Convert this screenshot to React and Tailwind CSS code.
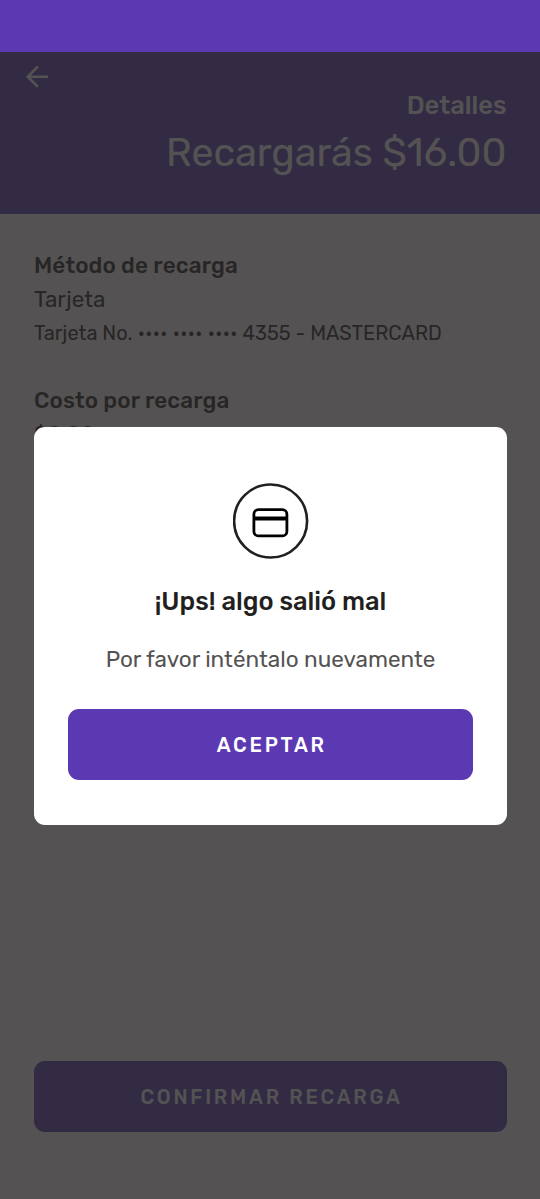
import clsx from 'clsx';

const Button = ({ children, className }) => (
  <button
    className={clsx(
      'flex h-[70.5px] w-full items-center justify-center rounded-[11px] bg-[#5b39b3] pl-[2.5px] text-[20px] font-medium tracking-[2.75px] text-white',
      className
    )}
  >
    {children}
  </button>
);

const BackIcon = () => (
  <svg className="h-[24px] w-[24px]" viewBox="0 0 24 24" fill="none" stroke="white" strokeWidth="2.6">
    <path d="M23 11.7H3M12.9 1.5L2.8 11.7l10.1 10.2" />
  </svg>
);

const CardIcon = () => (
  <svg className="h-[76px] w-[76px]" viewBox="0 0 76 76" fill="none">
    <circle cx="37.6" cy="38" r="36.5" stroke="#231f20" strokeWidth="2.6" />
    <rect x="20.9" y="26.7" width="33" height="26.2" rx="4.5" stroke="black" strokeWidth="2.8" />
    <path d="M20.5 35.4h33.5" stroke="black" strokeWidth="4" />
  </svg>
);

const App = () => {
  return (
    <div className="relative flex h-[1199px] w-[540px] flex-col overflow-hidden bg-white font-['Rubik','Roboto',sans-serif] text-[#231f20]">
      {/* Status bar */}
      <div className="h-[52px] shrink-0 bg-[#5b39b3]" />

      {/* Header */}
      <header className="h-[162px] shrink-0 bg-[#5b39b3] pt-[13px] pr-[33.5px] pl-[25px] text-white">
        <BackIcon />
        <div className="flex flex-col items-end whitespace-nowrap">
          <p className="text-[25.5px] leading-[32px] font-medium">Detalles</p>
          <h1 className="mt-[7px] text-[39.3px] leading-[50px]">Recargarás $16.00</h1>
        </div>
      </header>

      {/* Recharge details */}
      <main className="flex flex-1 flex-col pt-[35px] pr-[33.5px] pb-[67.5px] pl-[34px] whitespace-nowrap">
        <section>
          <h2 className="text-[22.5px] leading-[34px] font-medium tracking-[0.1px]">Método de recarga</h2>
          <p className="text-[22.5px] leading-[34px]">Tarjeta</p>
          <p className="-mt-[1px] text-[20px] leading-[34px]">
            <span>Tarjeta No. </span>
            <span className="tracking-[-0.1px]">•••• •••• ••••</span>
            <span> 4355 - MASTERCARD</span>
          </p>
        </section>
        <section className="mt-[34px]">
          <h2 className="text-[22.5px] leading-[34px] font-medium tracking-[0.1px]">Costo por recarga</h2>
          <p className="text-[22px] leading-[34px]">$0.00</p>
        </section>
        <Button className="mt-auto pt-[1px]">CONFIRMAR RECARGA</Button>
      </main>

      {/* Error dialog */}
      <div className="absolute inset-x-0 top-[52px] bottom-0 flex flex-col items-center bg-[#292727]/80 pt-[375px] pr-[33.5px] pl-[34px]">
        <div className="flex h-[398px] w-full flex-col items-center rounded-[11px] bg-white pt-[56px] pr-[33.5px] pl-[34px] whitespace-nowrap">
          <CardIcon />
          <h3 className="mt-[25px] text-[25.5px] leading-[34px] font-medium">¡Ups! algo salió mal</h3>
          <p className="mt-[25px] text-[22.5px] leading-[34px] text-[#545252]">Por favor inténtalo nuevamente</p>
          <Button className="mt-[32.4px]">ACEPTAR</Button>
        </div>
      </div>
    </div>
  );
};

export default App;
